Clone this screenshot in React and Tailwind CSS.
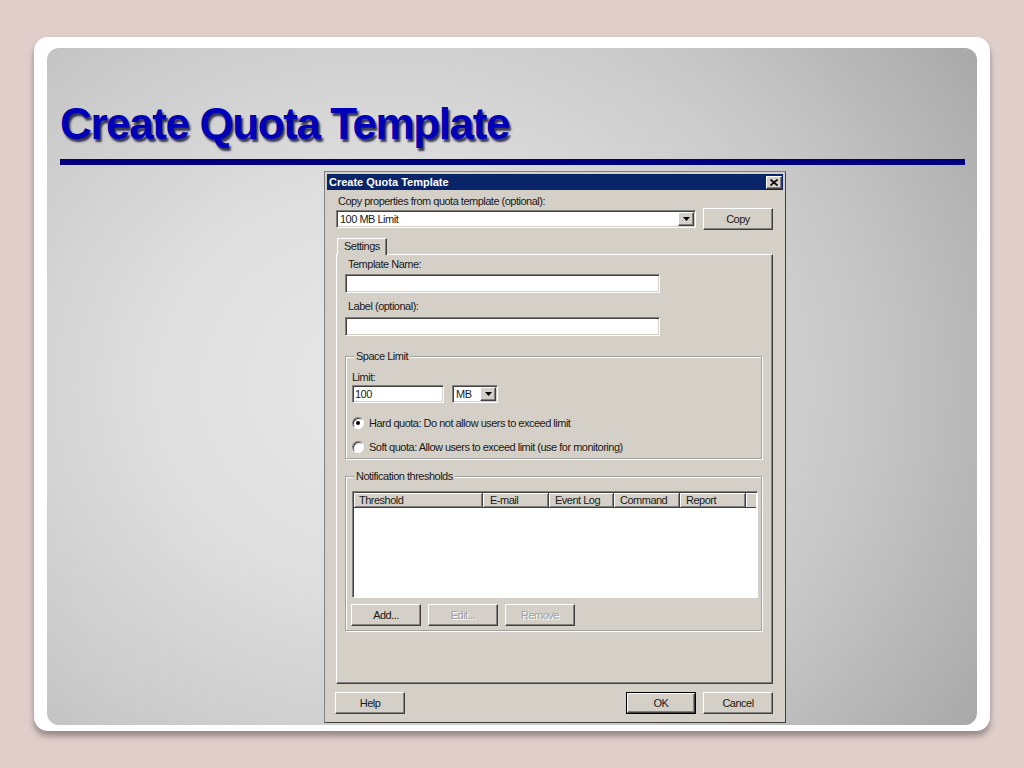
import React from "react";

const raised =
  "border border-t-white border-l-white border-r-[#404040] border-b-[#404040] shadow-[inset_-1px_-1px_0_#808080] bg-[#d4d0c8]";
const sunken =
  "border border-t-[#808080] border-l-[#808080] border-r-white border-b-white shadow-[inset_1px_1px_0_#404040,inset_-1px_-1px_0_#d4d0c8] bg-white";

function Btn({ children, disabled, def, className = "" }) {
  const inner = (
    <div
      className={`${raised} w-full h-full flex items-center justify-center ${
        disabled ? "text-[#a0a0a0] [text-shadow:1px_1px_0_#fff]" : "text-[#1a1a1a]"
      }`}
    >
      {children}
    </div>
  );
  if (def) {
    return (
      <div className={`w-[70px] h-[22px] border border-black flex ${className}`}>
        {inner}
      </div>
    );
  }
  return <div className={`w-[70px] h-[22px] flex ${className}`}>{inner}</div>;
}

function DropArrow() {
  return (
    <div className={`${raised} w-[16px] h-full flex items-center justify-center shrink-0`}>
      <svg width="7" height="4" viewBox="0 0 7 4">
        <path d="M0 0h7L3.5 4z" fill="#000" />
      </svg>
    </div>
  );
}

function Combo({ text, className = "" }) {
  return (
    <div className={`${sunken} h-[18px] flex items-stretch p-[1px] ${className}`}>
      <div className="flex-1 flex items-center pl-[2px]">{text}</div>
      <DropArrow />
    </div>
  );
}

function Group({ title, className = "", children }) {
  return (
    <div
      className={`border border-[#a0a0a0] shadow-[1px_1px_0_#fff,inset_1px_1px_0_#fff] flex flex-col ${className}`}
    >
      <div className="-mt-[7px] ml-[3px] w-fit px-[2px] bg-[#d4d0c8] leading-[13px]">
        {title}
      </div>
      {children}
    </div>
  );
}

function Radio({ checked, label, className = "" }) {
  return (
    <div className={`flex items-center h-[14px] gap-[5px] ${className}`}>
      <div className="w-[12px] h-[12px] rounded-full bg-white border border-t-[#808080] border-l-[#808080] border-r-white border-b-white shadow-[inset_1px_1px_0_#404040] flex items-center justify-center shrink-0">
        {checked && <div className="w-[4px] h-[4px] rounded-full bg-black" />}
      </div>
      <span>{label}</span>
    </div>
  );
}

const cols = [
  { t: "Threshold", w: "w-[129px]", p: "pl-[5px]" },
  { t: "E-mail", w: "w-[66px]", p: "pl-[7px]" },
  { t: "Event Log", w: "w-[65px]", p: "pl-[6px]" },
  { t: "Command", w: "w-[66px]", p: "pl-[6px]" },
  { t: "Report", w: "w-[66px]", p: "pl-[6px]" },
];

function Dialog({ className = "" }) {
  return (
    <div
      className={`w-[462px] h-[552px] shrink-0 border border-[#808080] border-r-[#404040] border-b-[#404040] bg-[#d4d0c8] p-[2px] flex flex-col text-[11px] leading-[13px] text-[#1a1a1a] tracking-[-0.5px] ${className}`}
    >
      {/* Title bar */}
      <div className="h-[16px] bg-[#0a246a] flex items-center justify-between pl-[2px] pr-[1px] shrink-0">
        <span className="text-white font-bold tracking-normal">Create Quota Template</span>
        <div className={`${raised} w-[16px] h-[13px] flex items-center justify-center`}>
          <svg width="8" height="7" viewBox="0 0 8 7">
            <path d="M0.5 0.5L7.5 6.5M7.5 0.5L0.5 6.5" stroke="#000" strokeWidth="1.6" />
          </svg>
        </div>
      </div>

      {/* Body */}
      <div className="pl-[9px] pr-[10px] pt-[5px] flex flex-col">
        <div className="ml-[2px]">Copy properties from quota template (optional):</div>
        <div className="flex items-center gap-[7px] h-[22px]">
          <Combo text="100 MB Limit" className="w-[360px]" />
          <Btn>Copy</Btn>
        </div>

        {/* Tab */}
        <div className="mt-[8px] ml-[1px] w-[50px] h-[17px] -mb-[1px] relative z-10 bg-[#d4d0c8] border-t border-l border-r border-t-white border-l-white border-r-[#404040] shadow-[inset_-1px_0_0_#808080] pl-[6px] pt-[1px]">
          Settings
        </div>

        {/* Panel */}
        <div className={`${raised} h-[430px] pl-[8px] pr-[10px] pt-[3px] flex flex-col`}>
          <div className="ml-[3px]">Template Name:</div>
          <div className={`${sunken} mt-[3px] w-[315px] h-[19px]`} />
          <div className="ml-[3px] mt-[7px]">Label (optional):</div>
          <div className={`${sunken} mt-[4px] w-[315px] h-[19px]`} />

          <Group title="Space Limit" className="mt-[20px] pl-[5px] pb-[4px]">
            <div className="mt-[8px] ml-[1px]">Limit:</div>
            <div className="mt-[1px] ml-[1px] flex items-center gap-[8px]">
              <div className={`${sunken} w-[92px] h-[18px] flex items-center pl-[2px]`}>100</div>
              <Combo text="MB" className="w-[46px]" />
            </div>
            <Radio checked label="Hard quota: Do not allow users to exceed limit" className="mt-[13px] ml-[1px]" />
            <Radio label="Soft quota: Allow users to exceed limit (use for monitoring)" className="mt-[10px] ml-[1px]" />
          </Group>

          <Group title="Notification thresholds" className="mt-[17px] pl-[5px] pb-[4px]">
            <div
              className={`mt-[8px] ml-[1px] w-[406px] h-[107px] border border-t-[#808080] border-l-[#808080] border-r-white border-b-white shadow-[inset_1px_1px_0_#404040] bg-white p-[1px] flex flex-col`}
            >
              <div className="h-[15px] flex bg-[#d4d0c8] shrink-0">
                {cols.map((c) => (
                  <div
                    key={c.t}
                    className={`${c.w} ${c.p} h-full flex items-center border-r border-b border-[#404040] shadow-[inset_1px_1px_0_#fff,inset_-1px_-1px_0_#808080] shrink-0`}
                  >
                    {c.t}
                  </div>
                ))}
                <div className="flex-1 h-full border-b border-[#404040] shadow-[inset_1px_1px_0_#fff]" />
              </div>
              <div className="flex-1 bg-white" />
            </div>
            <div className="mt-[6px] flex gap-[7px]">
              <Btn>Add...</Btn>
              <Btn disabled>Edit...</Btn>
              <Btn disabled>Remove</Btn>
            </div>
          </Group>
        </div>

        {/* Bottom buttons */}
        <div className="mt-[8px] flex h-[22px] items-center">
          <Btn className="-ml-[1px]">Help</Btn>
          <div className="flex-1" />
          <Btn def>OK</Btn>
          <Btn className="ml-[7px]">Cancel</Btn>
        </div>
      </div>
    </div>
  );
}

export default function App() {
  return (
    <div className="w-[1024px] h-[768px] bg-[#e0cecb] overflow-hidden pt-[37px] pl-[34px] font-['Liberation_Sans',Arial,sans-serif]">
      <div className="w-[956px] h-[694px] bg-white rounded-[14px] shadow-[0_5px_6px_rgba(0,0,0,0.35)] pt-[11px] px-[13px]">
        <div className="h-[677px] rounded-[12px] bg-[radial-gradient(ellipse_78%_95%_at_36%_50%,#e8e8e8_0%,#dedede_32%,#c8c8c8_65%,#a6a6a6_100%)] flex flex-col pl-[13px] overflow-visible">
          <h1 className="mt-[54px] h-[44px] text-[44px] leading-[44px] font-bold tracking-[-1.4px] text-[#0000b8] [text-shadow:2px_3px_2px_rgba(0,0,40,0.75)]">
            Create Quota Template
          </h1>
          <div className="mt-[13px] h-[6px] w-[905px] bg-[#00007f] shrink-0" />
          <Dialog className="mt-[6px] ml-[264px]" />
        </div>
      </div>
    </div>
  );
}
